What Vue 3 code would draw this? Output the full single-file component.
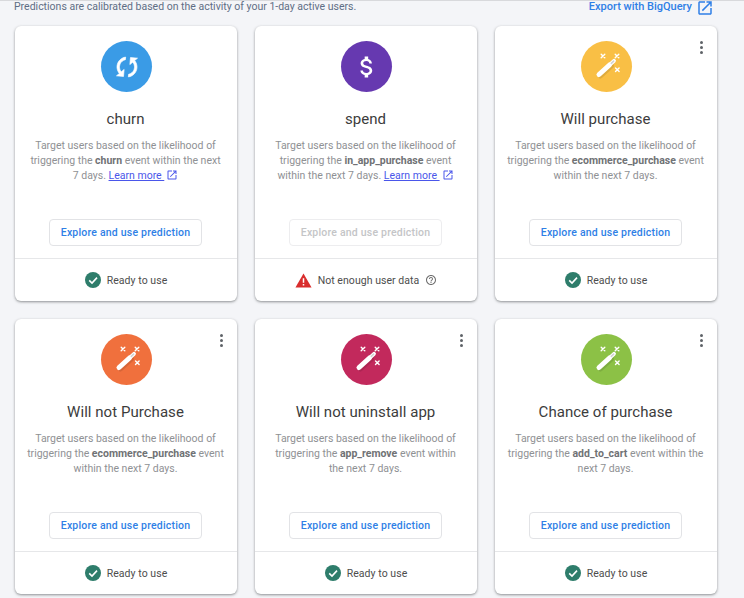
<script setup>
const paths = {
  sync: 'M12 4V1L8 5l4 4V6c3.31 0 6 2.69 6 6 0 1.01-.25 1.97-.7 2.8l1.46 1.46C19.54 15.03 20 13.57 20 12c0-4.42-3.58-8-8-8zm0 14c-3.31 0-6-2.69-6-6 0-1.01.25-1.97.7-2.8L5.24 7.74C4.46 8.97 4 10.43 4 12c0 4.42 3.58 8 8 8v3l4-4-4-4v3z',
  money: 'M11.8 10.9c-2.27-.59-3-1.2-3-2.15 0-1.09 1.01-1.85 2.7-1.85 1.78 0 2.44.85 2.5 2.1h2.21c-.07-1.72-1.12-3.3-3.21-3.81V3h-3v2.16c-1.94.42-3.5 1.68-3.5 3.61 0 2.31 1.91 3.46 4.7 4.13 2.5.6 3 1.48 3 2.41 0 .69-.49 1.79-2.7 1.79-2.06 0-2.87-.92-2.98-2.1h-2.2c.12 2.19 1.76 3.42 3.68 3.83V21h3v-2.15c1.95-.37 3.5-1.5 3.5-3.55 0-2.84-2.43-3.81-4.7-4.4z'
}
const openNew = 'M19 19H5V5h7V3H5c-1.11 0-2 .9-2 2v14c0 1.1.89 2 2 2h14c1.1 0 2-.9 2-2v-7h-2v7zM14 3v2h3.59l-9.83 9.83 1.41 1.41L19 6.41V10h2V3h-7z'
const help = 'M11 18h2v-2h-2v2zm1-16C6.48 2 2 6.48 2 12s4.48 10 10 10 10-4.48 10-10S17.52 2 12 2zm0 18c-4.41 0-8-3.59-8-8s3.59-8 8-8 8 3.59 8 8-3.59 8-8 8zm0-14c-2.21 0-4 1.79-4 4h2c0-1.1.9-2 2-2s2 .9 2 2c0 2-3 1.75-3 5h2c0-2.25 3-2.5 3-5 0-2.21-1.79-4-4-4z'
const sparkles = [[22, 15], [36, 15], [36.3, 28.8]]

const cards = [
  { title: 'churn', color: '#3a9be6', icon: 'sync', before: 'Target users based on the likelihood of triggering the ', event: 'churn', after: ' event within the next 7 days. ', learn: true },
  { title: 'spend', color: '#6639b0', icon: 'money', before: 'Target users based on the likelihood of triggering the ', event: 'in_app_purchase', after: ' event within the next 7 days. ', learn: true, disabled: true },
  { title: 'Will purchase', color: '#f9bf45', menu: true, before: 'Target users based on the likelihood of triggering the ', event: 'ecommerce_purchase', after: ' event within the next 7 days.' },
  { title: 'Will not Purchase', color: '#f0703d', menu: true, before: 'Target users based on the likelihood of triggering the ', event: 'ecommerce_purchase', after: ' event within the next 7 days.' },
  { title: 'Will not uninstall app', color: '#c2295c', menu: true, before: 'Target users based on the likelihood of triggering the ', event: 'app_remove', after: ' event within the next 7 days.' },
  { title: 'Chance of purchase', color: '#8cc146', menu: true, before: 'Target users based on the likelihood of triggering the ', event: 'add_to_cart', after: ' event within the next 7 days.' }
]
</script>

<template>
  <div class="page">
    <header class="top">
      <span class="note">Predictions are calibrated based on the activity of your 1-day active users.</span>
      <a class="export">
        Export with BigQuery
        <svg class="export-icon" viewBox="0 0 24 24" width="18" height="18"><path :d="openNew" fill="#2f7fe6" /></svg>
      </a>
    </header>
    <main class="grid">
      <article v-for="card in cards" :key="card.title" class="card">
        <div v-if="card.menu" class="menu"><i></i><i></i><i></i></div>
        <div class="body">
          <div class="badge" :style="{ background: card.color }">
            <svg v-if="card.icon === 'sync'" class="sync" viewBox="0 0 24 24" width="30" height="30"><path :d="paths.sync" fill="#fff" stroke="#fff" stroke-width="0.5" /></svg>
            <svg v-else-if="card.icon" viewBox="0 0 24 24" width="28" height="28"><path :d="paths[card.icon]" fill="#fff" /></svg>
            <svg v-else viewBox="0 0 51 51" width="51" height="51">
              <path d="M19.5 35 L30.5 25" stroke="rgba(0,0,0,.1)" stroke-width="5" stroke-linecap="round" />
              <g stroke="#fff" stroke-width="1.4" stroke-linecap="round">
                <g v-for="s in sparkles" :key="s[0] + '-' + s[1]">
                  <path :d="`M${s[0] - 1.8} ${s[1] - 1.8}l3.6 3.6M${s[0] + 1.8} ${s[1] - 1.8}l-3.6 3.6`" />
                </g>
              </g>
              <path d="M18 33.5 L28.5 24" stroke="#fff" stroke-width="5" stroke-linecap="round" />
              <path d="M30 22.6 L33 19.8" stroke="#fff" stroke-width="3.8" stroke-linecap="round" fill="none" />
              <path d="M30.3 22.3 L32.6 20.2" stroke="rgba(0,0,0,.18)" stroke-width="1.6" stroke-linecap="round" />
            </svg>
          </div>
          <h2 class="title">{{ card.title }}</h2>
          <p class="desc">
            {{ card.before }}<b>{{ card.event }}</b>{{ card.after }}<template v-if="card.learn"><a class="learn">Learn more&nbsp;</a><svg class="learn-icon" viewBox="0 0 24 24" width="12" height="12"><path :d="openNew" fill="#4a56ea" /></svg></template>
          </p>
        </div>
        <div class="action">
          <button class="btn" :class="{ off: card.disabled }">Explore and use prediction</button>
        </div>
        <footer class="status">
          <template v-if="card.disabled">
            <svg viewBox="0 0 18 16" width="17" height="15"><path d="M9 .5 17.6 15.5H.4z" fill="#d92d2d" /><path d="M8.2 5.5h1.6v5H8.2zM8.2 11.7h1.6v1.6H8.2z" fill="#fff" /></svg>
            <span>Not enough user data</span>
            <svg viewBox="0 0 24 24" width="12" height="12"><path :d="help" fill="#6e6e6e" /></svg>
          </template>
          <template v-else>
            <svg viewBox="0 0 16 16" width="16" height="16"><circle cx="8" cy="8" r="8" fill="#2e7d6b" /><path d="M4.2 8.3 7 11l5-5.4" fill="none" stroke="#fff" stroke-width="1.6" /></svg>
            <span>Ready to use</span>
          </template>
        </footer>
      </article>
    </main>
  </div>
</template>

<style scoped>
.page {
  width: 744px;
  height: 598px;
  box-sizing: border-box;
  overflow: hidden;
  background: #f4f5f8;
  border-top: 1px solid #d8d9dc;
  padding: 0 27px 0 15px;
  font-family: Roboto, "Liberation Sans", sans-serif;
}
.top {
  height: 25px;
  display: flex;
  justify-content: space-between;
  align-items: flex-start;
}
.note {
  font-size: 10.5px;
  line-height: 12px;
  color: #5f6e85;
  margin-left: -1px;
}
.export {
  display: flex;
  align-items: flex-start;
  gap: 4px;
  font-size: 11px;
  line-height: 12px;
  font-weight: 500;
  color: #2f7fe6;
  margin-right: 5px;
}
.export-icon {
  margin-top: -2px;
  margin-right: -2px;
}
.grid {
  display: grid;
  grid-template-columns: repeat(3, 222px);
  grid-auto-rows: 275px;
  gap: 18px;
}
.card {
  position: relative;
  display: flex;
  flex-direction: column;
  background: #fff;
  border-radius: 6px;
  box-shadow: 0 1px 3px rgba(60, 64, 67, .4), 0 1px 2px rgba(60, 64, 67, .2);
}
.menu {
  position: absolute;
  top: 15px;
  right: 14px;
  display: flex;
  flex-direction: column;
  gap: 2px;
}
.menu i {
  width: 3px;
  height: 3px;
  border-radius: 50%;
  background: #5f6368;
}
.body {
  height: 193px;
  box-sizing: border-box;
  padding: 15px 1px 0 0;
  display: flex;
  flex-direction: column;
  align-items: center;
}
.badge {
  width: 51px;
  height: 51px;
  margin-left: 2px;
  border-radius: 50%;
  display: flex;
  align-items: center;
  justify-content: center;
}
.sync {
  transform: rotate(50deg);
}
.title {
  margin: 17px 0 0;
  font-size: 15px;
  line-height: 20px;
  font-weight: 400;
  color: #3c3c3c;
  letter-spacing: 0.04px;
}
.desc {
  margin: 9px 0 0;
  width: 197.5px;
  text-align: center;
  font-size: 10.5px;
  line-height: 15px;
  color: #8f9194;
}
.desc b {
  font-weight: 700;
  color: #707275;
}
.learn {
  color: #4a56ea;
  text-decoration: underline;
}
.learn-icon {
  vertical-align: -2px;
  margin-left: 2px;
}
.action {
  height: 39px;
  padding-right: 1px;
  display: flex;
  justify-content: center;
  align-items: flex-start;
}
.btn {
  width: 153px;
  height: 27px;
  box-sizing: border-box;
  background: #fff;
  border: 1px solid #e2e3e6;
  border-radius: 4px;
  padding: 0;
  font-family: inherit;
  font-size: 10.5px;
  font-weight: 500;
  color: #2f7fe6;
  letter-spacing: 0.2px;
}
.btn.off {
  color: #c4c5c7;
  border-color: #ededef;
}
.status {
  flex: 1;
  border-top: 1px solid #e6e7e9;
  display: flex;
  justify-content: center;
  align-items: center;
  gap: 6px;
  font-size: 10.5px;
  color: #4d4d4d;
  letter-spacing: 0.05px;
}
</style>
